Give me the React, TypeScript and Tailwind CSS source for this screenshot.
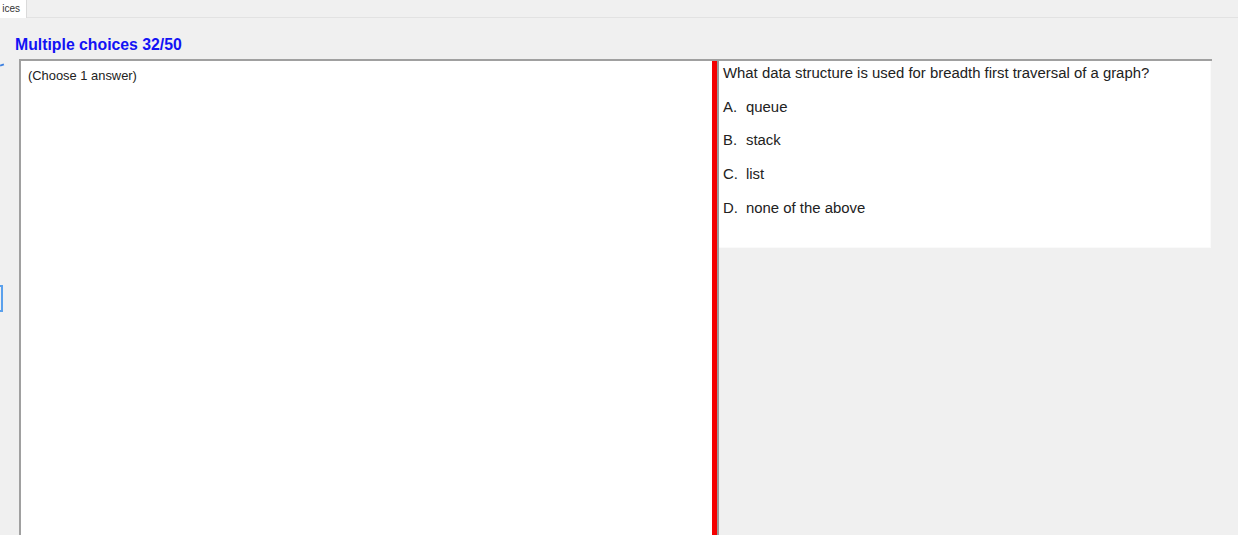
import React from "react";

export default function App() {
  const options = [
    { k: "A.", t: "queue", mt: "mt-[18px]" },
    { k: "B.", t: "stack", mt: "mt-[17px]" },
    { k: "C.", t: "list", mt: "mt-[18px]" },
    { k: "D.", t: "none of the above", mt: "mt-[18px]" },
  ];
  return (
    <div
      className="w-[1238px] h-[535px] bg-[#f0f0f0] overflow-hidden flex flex-col text-[#222]"
      style={{ fontFamily: '"Liberation Sans", Arial, sans-serif' }}
    >
      {/* tab strip */}
      <div className="h-[18px] flex border-b border-[#e2e2e2] shrink-0">
        <div className="w-[27px] h-[18px] bg-white border-r border-[#dadada] overflow-hidden flex justify-end items-center pr-[6px]">
          <span className="text-[10px] leading-none text-[#333]">ices</span>
        </div>
      </div>

      {/* title */}
      <div className="h-[41px] shrink-0 pl-[15px] pt-[15px]">
        <span className="text-[15.8px] leading-[18px] font-bold text-[#1212f5]">
          Multiple choices 32/50
        </span>
      </div>

      {/* main */}
      <div className="flex flex-1 min-h-0">
        {/* gutter */}
        <div className="w-[19px] shrink-0 flex flex-col">
          <div className="mt-[5px] h-[2px] w-[4px] bg-[#3b7fe0] rotate-[-20deg]" />
          <div className="mt-[219px] h-[27px] w-[3px] border-r-2 border-y-2 border-[#5aa0ec]" />
        </div>

        <div className="flex flex-col flex-1 min-h-0">
          <div className="h-[2px] w-[1193px] bg-[#a0a0a0] shrink-0" />
          <div className="flex flex-1 min-h-0">
            {/* left answer box */}
            <div className="w-[693px] border-l-2 border-[#a0a0a0] bg-white shrink-0 pl-[7px] pt-[2px]">
              <span className="text-[12.9px] leading-[16px] text-[#222]">
                (Choose 1 answer)
              </span>
            </div>
            {/* red bar */}
            <div className="w-[5px] bg-[#f40000] shrink-0" />
            <div className="w-[2px] bg-[#9a9a9a] shrink-0" />
            {/* question panel */}
            <div className="flex flex-col">
              <div className="w-[492px] h-[187px] bg-white border-r border-b border-[#fafafa] pl-[4px] pt-[4px]">
                <div className="text-[14.9px] leading-[16px]">
                  What data structure is used for breadth first traversal of a graph?
                </div>
                {options.map((o) => (
                  <div key={o.k} className={`${o.mt} text-[14.9px] leading-[16px] flex`}>
                    <span className="w-[23px]">{o.k}</span>
                    <span>{o.t}</span>
                  </div>
                ))}
              </div>
            </div>
          </div>
        </div>
      </div>
    </div>
  );
}
